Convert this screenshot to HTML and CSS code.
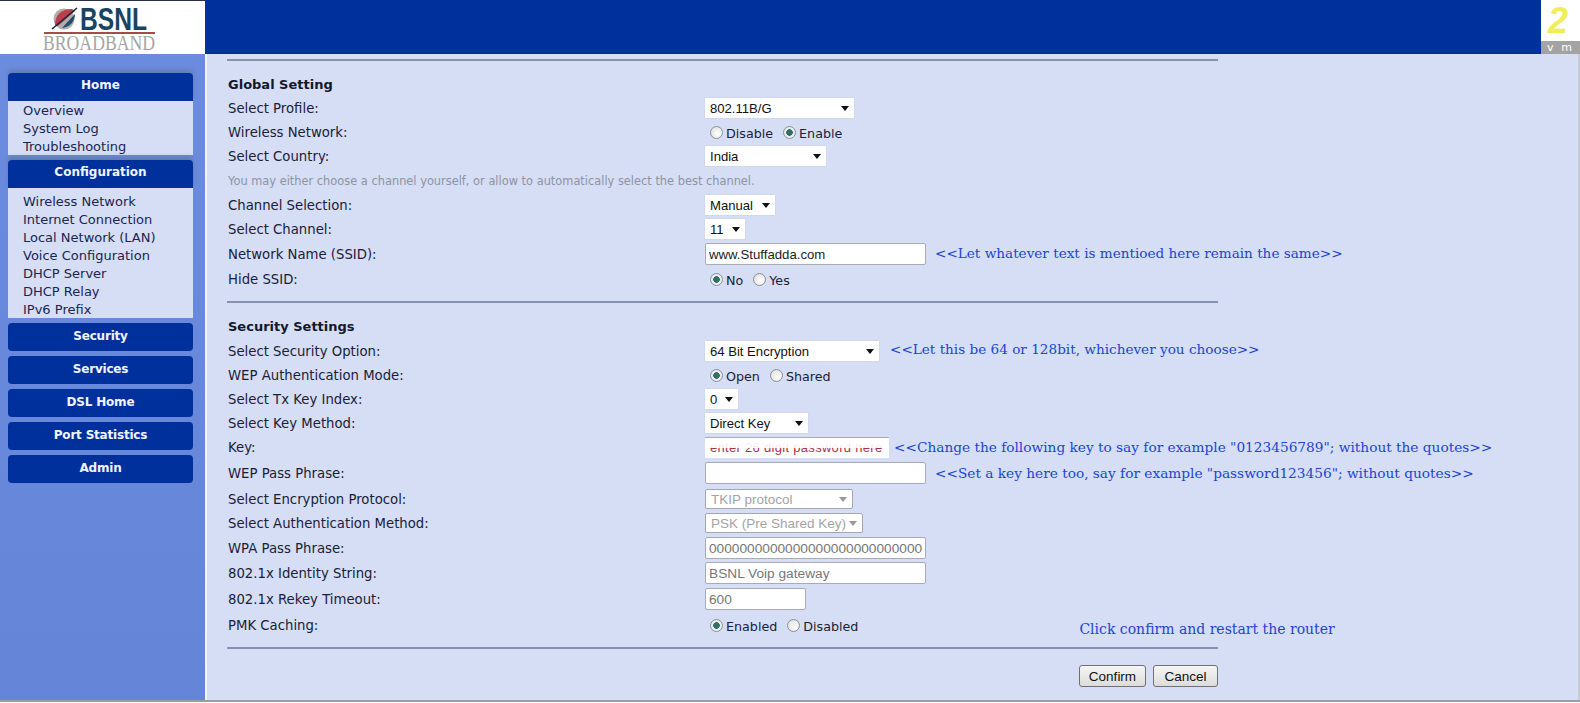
FILE: index.html
```html
<!DOCTYPE html>
<html lang="en">
<head>
<meta charset="UTF-8" />
<title>BSNL Broadband - Wireless Network</title>
<link rel="stylesheet" href="styles.css">
</head>
<body>

<div id="header">
  <div class="logo">
    <svg width="205" height="54" viewBox="0 0 205 54">
      <circle cx="64" cy="19" r="10.5" fill="#b5abab" />
      <path d="M55 25 C55 15 61 9 72 9 L75 11 L58 26 Z" fill="#b8404e" />
      <path d="M52 29 L77 8" stroke="#16243f" stroke-width="1.5" fill="none" />
      <path d="M62 28 L75 14 C75 20 71 27 62 28 Z" fill="#1d4f6c" />
      <text class="logo-bsnl" x="80" y="30" textLength="67" lengthAdjust="spacingAndGlyphs">BSNL</text>
      <rect x="44" y="32" width="111" height="2" fill="#a8494a" />
      <text class="logo-broad" x="43" y="50" textLength="112" lengthAdjust="spacingAndGlyphs">BROADBAND</text>
    </svg>
  </div>
  <div class="banner"></div>
  <div class="corner">
    <div class="corner-num">2</div>
    <div class="corner-bar"><span>v</span><span>m</span></div>
  </div>
</div>

<div id="page">
  <div id="sidebar">
    <div class="menu-head first">Home</div>
    <div class="menu-items short">
      <div>Overview</div>
      <div>System Log</div>
      <div>Troubleshooting</div>
    </div>
    <div class="menu-head">Configuration</div>
    <div class="menu-items long">
      <div>Wireless Network</div>
      <div>Internet Connection</div>
      <div>Local Network (LAN)</div>
      <div>Voice Configuration</div>
      <div>DHCP Server</div>
      <div>DHCP Relay</div>
      <div>IPv6 Prefix</div>
    </div>
    <div class="menu-head big">Security</div>
    <div class="menu-head big">Services</div>
    <div class="menu-head big">DSL Home</div>
    <div class="menu-head big">Port Statistics</div>
    <div class="menu-head big">Admin</div>
  </div>

  <div id="main">
    <div class="form">
      <hr class="rule first-rule">

      <div class="heading">Global Setting</div>
      <div class="row">
        <label>Select Profile:</label>
        <div class="val"><span class="select w150"><select><option>802.11B/G</option></select></span></div>
      </div>
      <div class="row">
        <label>Wireless Network:</label>
        <div class="val radios"><input type="radio" name="wl"><span>Disable</span><input type="radio" name="wl" checked><span>Enable</span></div>
      </div>
      <div class="row">
        <label>Select Country:</label>
        <div class="val"><span class="select w121"><select><option>India</option></select></span></div>
      </div>
      <div class="row hint">You may either choose a channel yourself, or allow to automatically select the best channel.</div>
      <div class="row">
        <label>Channel Selection:</label>
        <div class="val"><span class="select w70"><select><option>Manual</option></select></span></div>
      </div>
      <div class="row">
        <label>Select Channel:</label>
        <div class="val"><span class="select w40"><select><option>11</option></select></span></div>
      </div>
      <div class="row h26">
        <label>Network Name (SSID):</label>
        <div class="val"><input class="text w221" type="text" value="www.Stuffadda.com"><span class="note narrow ml9 up2">&lt;&lt;Let whatever text is mentioed here remain the same&gt;&gt;</span></div>
      </div>
      <div class="row">
        <label>Hide SSID:</label>
        <div class="val radios"><input type="radio" name="hide" checked><span>No</span><input type="radio" name="hide"><span>Yes</span></div>
      </div>

      <hr class="rule mid-rule">

      <div class="heading">Security Settings</div>
      <div class="row">
        <label>Select Security Option:</label>
        <div class="val"><span class="select w174"><select><option>64 Bit Encryption</option></select></span><span class="note narrow ml11 up5">&lt;&lt;Let this be 64 or 128bit, whichever you choose&gt;&gt;</span></div>
      </div>
      <div class="row">
        <label>WEP Authentication Mode:</label>
        <div class="val radios"><input type="radio" name="auth" checked><span>Open</span><input type="radio" name="auth"><span>Shared</span></div>
      </div>
      <div class="row">
        <label>Select Tx Key Index:</label>
        <div class="val"><span class="select w33"><select><option>0</option></select></span></div>
      </div>
      <div class="row">
        <label>Select Key Method:</label>
        <div class="val"><span class="select w103"><select><option>Direct Key</option></select></span></div>
      </div>
      <div class="row">
        <label>Key:</label>
        <div class="val"><span class="key"><span>enter 26 digit password here</span><span class="key-smear"></span></span><span class="note ml5">&lt;&lt;Change the following key to say for example "0123456789"; without the quotes&gt;&gt;</span></div>
      </div>
      <div class="row h28">
        <label>WEP Pass Phrase:</label>
        <div class="val"><input class="text w221" type="text"><span class="note ml9">&lt;&lt;Set a key here too, say for example "password123456"; without quotes&gt;&gt;</span></div>
      </div>
      <div class="row">
        <label>Select Encryption Protocol:</label>
        <div class="val"><span class="select w148 off"><select disabled><option>TKIP protocol</option></select></span></div>
      </div>
      <div class="row">
        <label>Select Authentication Method:</label>
        <div class="val"><span class="select w158 off"><select disabled><option>PSK (Pre Shared Key)</option></select></span></div>
      </div>
      <div class="row h26">
        <label>WPA Pass Phrase:</label>
        <div class="val"><input class="text w221 off" type="text" disabled value="00000000000000000000000000000000000000"></div>
      </div>
      <div class="row">
        <label>802.1x Identity String:</label>
        <div class="val"><input class="text w221 off" type="text" disabled value="BSNL Voip gateway"></div>
      </div>
      <div class="row h28">
        <label>802.1x Rekey Timeout:</label>
        <div class="val"><input class="text w101 off" type="text" disabled value="600"></div>
      </div>
      <div class="row">
        <label>PMK Caching:</label>
        <div class="val radios"><input type="radio" name="pmk" checked><span>Enabled</span><input type="radio" name="pmk"><span>Disabled</span><span class="note restart">Click confirm and restart the router</span></div>
      </div>

      <hr class="rule last-rule">

      <div class="buttons">
        <button type="button">Confirm</button>
        <button type="button">Cancel</button>
      </div>
    </div>
  </div>
</div>

</body>
</html>
```

FILE: styles.css
```css
html, body { margin: 0; padding: 0; height: 703px; overflow: hidden; background: #fff; }
body { font-family: "DejaVu Sans", Verdana, sans-serif; font-size: 13.25px; color: #1b2038; }

#header { display: flex; height: 54px; background: #00309c; }
.logo { width: 205px; height: 54px; background: #fff; border-top: 1px solid #26304a; box-sizing: border-box; }
.logo svg { display: block; margin-top: -1px; }
.logo-bsnl { font-family: "Liberation Sans", Arial, sans-serif; font-weight: bold; font-size: 31px; fill: #17445f; }
.logo-broad { font-family: "Liberation Serif", serif; font-size: 21px; fill: #a5a5a2; }
.banner { flex: 1; }
.corner { width: 39px; background: #fff; display: flex; flex-direction: column; }
.corner-num { height: 41px; font-family: "Liberation Sans", sans-serif; font-size: 36px; line-height: 41px; font-style: italic; font-weight: bold; color: #f1ee5c; padding-left: 7px; }
.corner-bar { height: 13px; background: #a3a3a3; color: #fff; font-size: 11px; line-height: 14px; padding: 0 8px 0 6px; display: flex; justify-content: space-between; }

#page { display: flex; height: 646px; border-bottom: 2px solid #9a9da6; }
#sidebar { flex: none; width: 189px; padding: 19px 8px 0; background: linear-gradient(#6b8cde, #6485d8); }
.menu-head {
  width: 185px; height: 28px; background: #00309c; color: #f1f5ff; border-radius: 4px 4px 0 0;
  font-weight: bold; font-size: 12px; line-height: 25px; text-align: center; margin-top: 5px;
  box-shadow: 0 -3px 4px rgba(90,100,130,0.45);
}
.menu-head.first { margin-top: 0; }
.menu-head.big { font-size: 12px; line-height: 27px; letter-spacing: -0.2px; border-radius: 4px; box-shadow: none; }
.menu-items { width: 185px; background: #d5def5; box-sizing: border-box; padding: 1px 0 0 15px; font-size: 13px; line-height: 18px; color: #1b2550; }
.menu-items.short { height: 54px; }
.menu-items.long { height: 130px; padding-top: 5px; }

#main { flex: 1; background: #d5def5; border-left: 2px solid #f1f4fc; border-right: 2px solid #c8ccd4; padding-left: 20px; overflow: hidden; }
.form { width: 991px; }
.rule { border: 0; height: 2px; background: #8792ae; margin: 0; }
.first-rule { margin-top: 5px; }
.mid-rule { margin-top: 10px; }
.last-rule { margin-top: 10px; }
.heading { font-weight: bold; font-size: 13px; height: 24px; line-height: 25px; padding-left: 1px; color: #14182c; margin-top: 11px; }
.mid-rule + .heading { margin-top: 12px; line-height: 23px; }
.row { display: flex; align-items: center; height: 24px; padding-left: 1px; white-space: nowrap; }
.row.h26 { height: 26px; }
.row.h28 { height: 28px; }
.row.hint { height: 25px; color: #8e93a3; font-size: 11.4px; }
.row label { width: 477px; flex: none; }
.val { display: flex; align-items: center; }
.radios input { appearance: none; width: 13px; height: 13px; margin: 0 3px 0 5px; border-radius: 50%; background: radial-gradient(circle at 60% 60%, #fff, #d9d9d6); border: 1px solid #8c9099; box-sizing: border-box; }
.radios input:checked { background: radial-gradient(circle, #2f6f68 0 3px, #e9ecec 3.6px); }
.radios span { margin-right: 5px; padding-top: 3px; font-size: 12.7px; }

.select { display: inline-block; height: 20px; position: relative; background: #fff; box-shadow: 0 0 1px #b8bccc; }
.select select { appearance: none; border: 0; background: transparent; width: 100%; height: 20px; padding: 0 0 0 5px; font-family: "Liberation Sans", Arial, sans-serif; font-size: 13.1px; color: #111; outline: none; }
.select::after { content: ""; position: absolute; right: 5px; top: 8px; border: 4px solid transparent; border-top: 5px solid #111; border-bottom: 0; }
.select.off { border: 1px solid #a4a7ae; height: 18px; border-radius: 2px; box-shadow: none; }
.select.off select { height: 18px; font-size: 13.5px; color: #7c7c7c; }
.select.off::after { border-top-color: #999; top: 7px; }

.w33 { width: 33px; } .w40 { width: 40px; } .w70 { width: 70px; } .w103 { width: 103px; }
.w121 { width: 121px; } .w148 { width: 146px; } .w150 { width: 149px; } .w158 { width: 156px; } .w174 { width: 174px; }

.text { height: 22px; box-sizing: border-box; border: 1px solid #a8abb3; border-radius: 2px; background: #fff; padding: 0 3px; font-family: "Liberation Sans", Arial, sans-serif; font-size: 13.2px; color: #222; margin: 0; }
.text.off { color: #777; font-size: 13.7px; }
.w221 { width: 221px; } .w101 { width: 101px; }

.key { display: inline-block; position: relative; width: 184px; height: 21px; background: #fff; overflow: hidden; border-top: 1px solid #a8abb3; font-family: "Liberation Sans", sans-serif; font-size: 13px; letter-spacing: 0.3px; line-height: 20px; color: #b03044; padding-left: 5px; box-sizing: border-box; }
.key-smear { position: absolute; left: 0; right: 0; top: 2px; height: 8px; background: #fff; opacity: 0.9; }

.note { font-family: "DejaVu Serif", serif; font-size: 13.7px; color: #2144d0; }
.note.narrow { font-size: 13.6px; }
.up2 { margin-bottom: 2px; }
.up5 { margin-bottom: 5px; }
.ml5 { margin-left: 5px; } .ml9 { margin-left: 9px; } .ml11 { margin-left: 11px; }
.radios .note.restart { margin-left: 216px; padding-top: 8px; margin-right: 0; font-size: 14px; }

.buttons { display: flex; justify-content: flex-end; gap: 7px; margin-top: 16px; }
.buttons button { height: 22px; padding: 0; width: 67px; border: 1px solid #707070; border-radius: 3px; background: linear-gradient(#f6f6f6, #dcdcdc); font-family: "Liberation Sans", Arial, sans-serif; font-size: 13.5px; color: #111; }
.buttons button + button { width: 65px; }
```
